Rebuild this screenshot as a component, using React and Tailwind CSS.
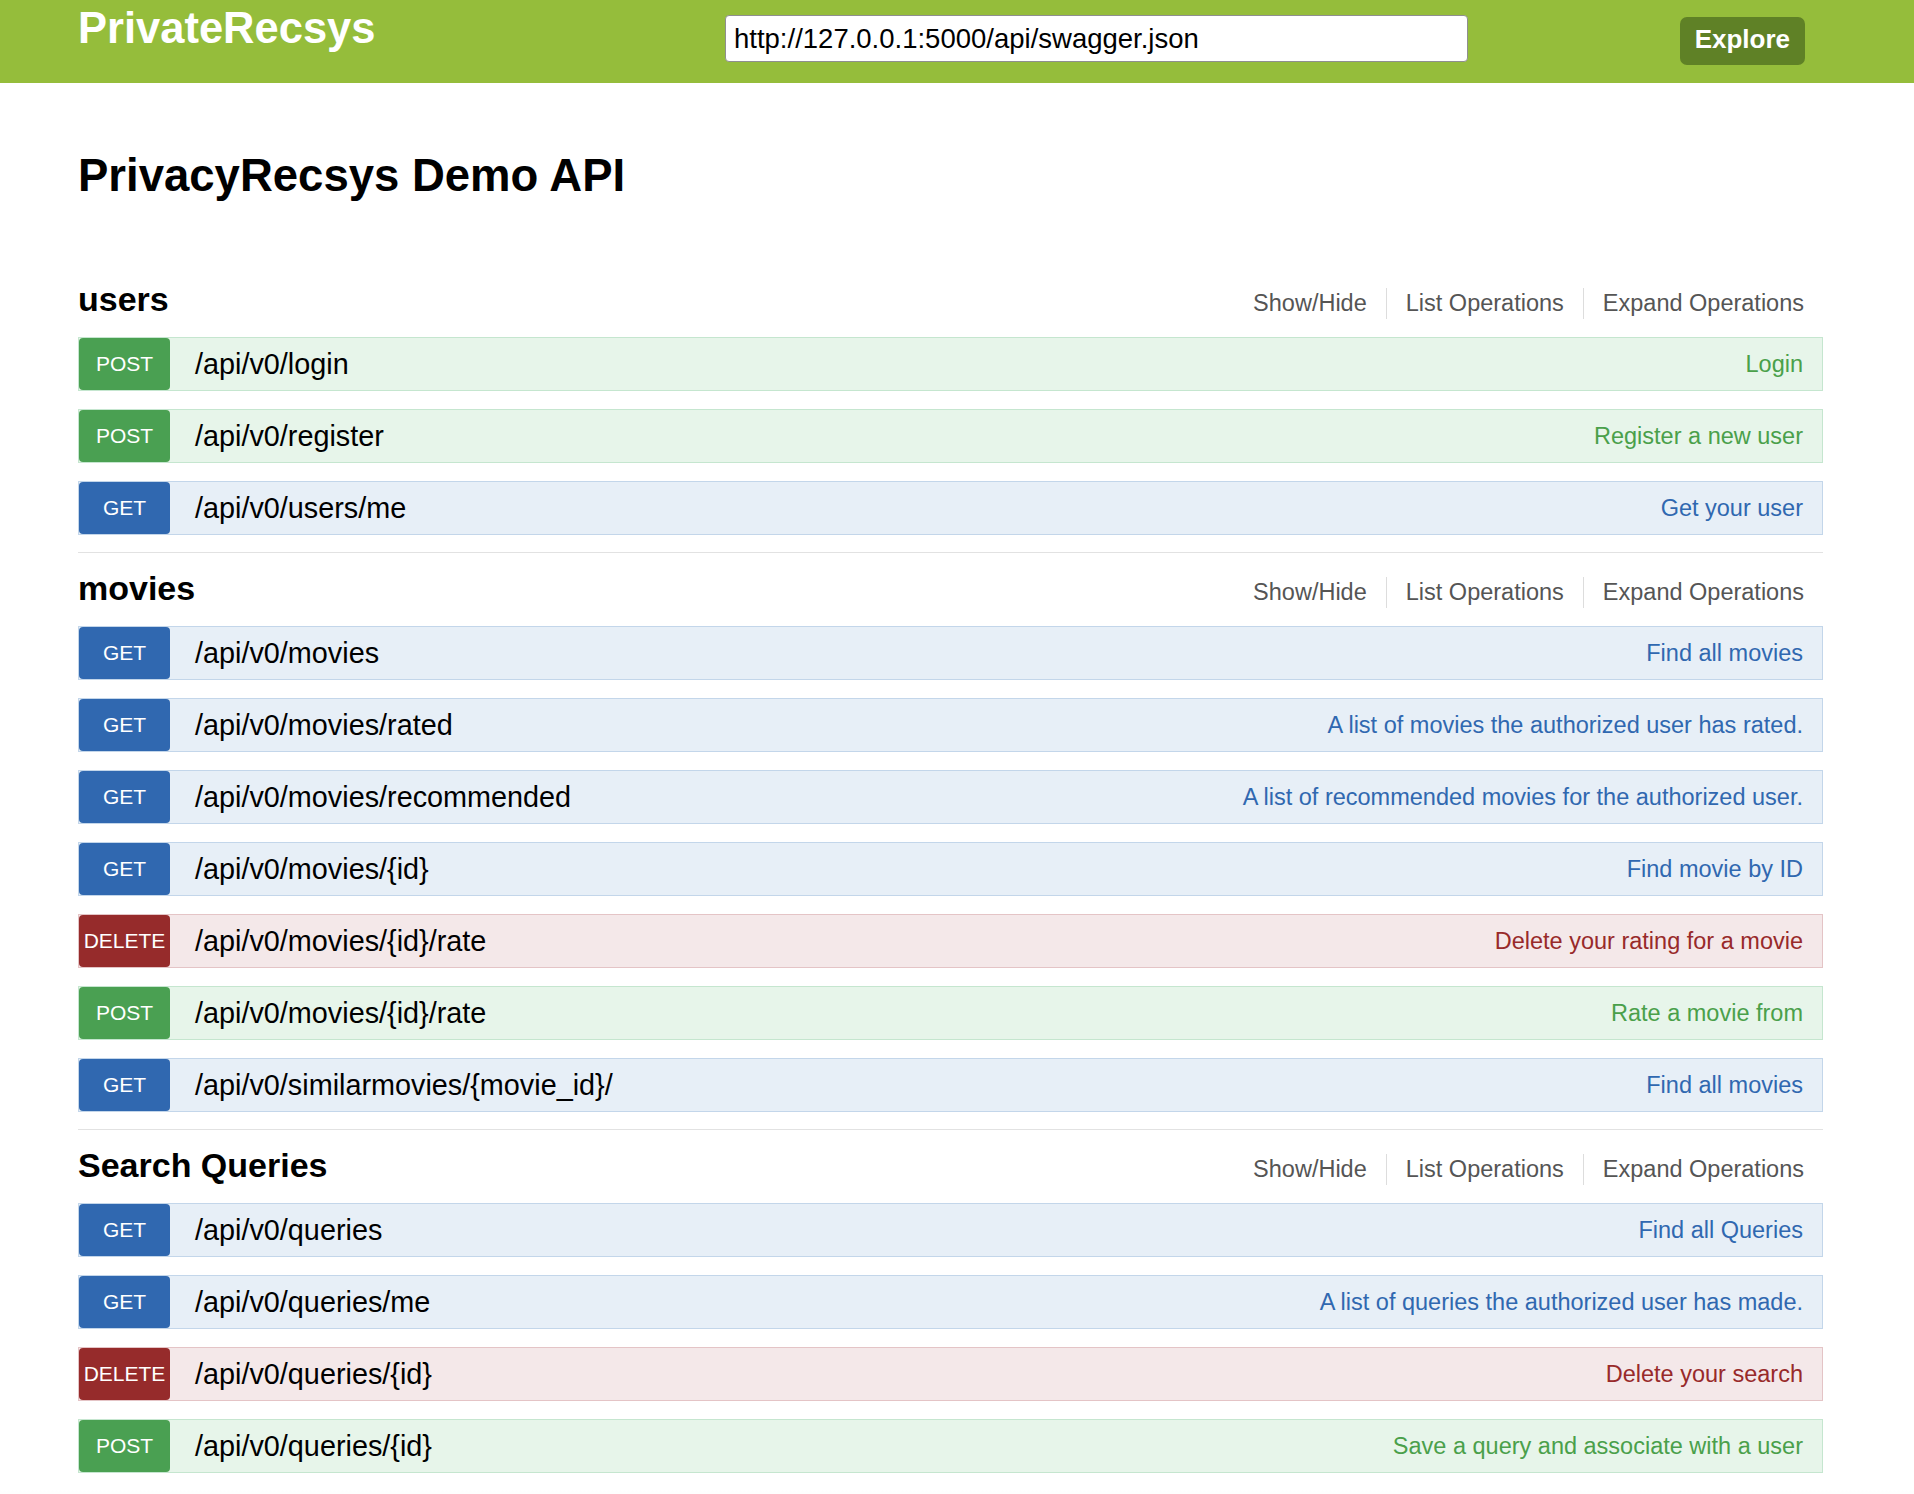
import React from "react";

const STYLES = {
  POST: {
    row: "bg-[#e7f5ea] border-[#c5e6cf]",
    badge: "bg-[#4aa052]",
    desc: "text-[#4aa04a]",
  },
  GET: {
    row: "bg-[#e7eff7] border-[#c3d6ea]",
    badge: "bg-[#3068b0]",
    desc: "text-[#3068b0]",
  },
  DELETE: {
    row: "bg-[#f4e8e9] border-[#e4c4c6]",
    badge: "bg-[#962b2b]",
    desc: "text-[#982a2a]",
  },
};

const SECTIONS = [
  {
    name: "users",
    ops: [
      ["POST", "/api/v0/login", "Login"],
      ["POST", "/api/v0/register", "Register a new user"],
      ["GET", "/api/v0/users/me", "Get your user"],
    ],
  },
  {
    name: "movies",
    ops: [
      ["GET", "/api/v0/movies", "Find all movies"],
      ["GET", "/api/v0/movies/rated", "A list of movies the authorized user has rated."],
      ["GET", "/api/v0/movies/recommended", "A list of recommended movies for the authorized user."],
      ["GET", "/api/v0/movies/{id}", "Find movie by ID"],
      ["DELETE", "/api/v0/movies/{id}/rate", "Delete your rating for a movie"],
      ["POST", "/api/v0/movies/{id}/rate", "Rate a movie from"],
      ["GET", "/api/v0/similarmovies/{movie_id}/", "Find all movies"],
    ],
  },
  {
    name: "Search Queries",
    ops: [
      ["GET", "/api/v0/queries", "Find all Queries"],
      ["GET", "/api/v0/queries/me", "A list of queries the authorized user has made."],
      ["DELETE", "/api/v0/queries/{id}", "Delete your search"],
      ["POST", "/api/v0/queries/{id}", "Save a query and associate with a user"],
    ],
  },
];

function Row({ method, path, desc }) {
  const s = STYLES[method];
  return (
    <div className={`flex items-center h-[54px] border ${s.row}`}>
      <div
        className={`w-[91px] h-full shrink-0 rounded-[4px] flex items-center justify-center text-white text-[21px] ${s.badge}`}
      >
        {method}
      </div>
      <div className="ml-[25px] text-[28.8px] text-black leading-[normal]">{path}</div>
      <div className={`ml-auto pr-[19px] text-[23.5px] leading-[normal] ${s.desc}`}>{desc}</div>
    </div>
  );
}

function Section({ name, ops, last }) {
  return (
    <section className={`pb-[17px] ${last ? "" : "border-b border-[#e2e2e2]"}`}>
      <div className="flex items-baseline justify-between pt-[16px] h-[73px]">
        <h2 className="text-[34px] font-bold text-black leading-[normal]">{name}</h2>
        <div className="flex items-baseline text-[23.5px] text-[#555] leading-[31px]">
          <span className="px-[19px]">Show/Hide</span>
          <span className="px-[19px] border-l border-[#dddddd]">List Operations</span>
          <span className="px-[19px] border-l border-[#dddddd]">Expand Operations</span>
        </div>
      </div>
      <div className="flex flex-col gap-[18px]">
        {ops.map(([m, p, d], i) => (
          <Row key={i} method={m} path={p} desc={d} />
        ))}
      </div>
    </section>
  );
}

export default function App() {
  return (
    <div className="min-h-screen bg-white font-['Liberation_Sans',Arial,sans-serif]">
      <header className="h-[83px] bg-[#95bd3b] flex items-start pl-[78px] pr-[109px]">
        <div className="w-[647px] shrink-0 mt-[4px] text-[43.5px] font-bold text-white leading-[normal]">
          PrivateRecsys
        </div>
        <input
          readOnly
          value="http://127.0.0.1:5000/api/swagger.json"
          className="w-[743px] h-[47px] mt-[15px] px-[8px] bg-white border border-[#8f8f8f] rounded-[4px] text-[27.5px] text-black outline-none font-['Liberation_Sans',Arial,sans-serif]"
        />
        <button className="ml-auto mt-[17px] h-[48px] px-[15px] pb-[4px] rounded-[7px] bg-[#5f8126] text-white text-[26px] font-bold leading-none">
          Explore
        </button>
      </header>
      <main className="pl-[78px] pr-[91px]">
        <h1 className="pt-[67px] mb-[62px] text-[45.5px] font-bold text-black leading-[normal]">
          PrivacyRecsys Demo API
        </h1>
        {SECTIONS.map((s, i) => (
          <Section key={s.name} name={s.name} ops={s.ops} last={i === SECTIONS.length - 1} />
        ))}
      </main>
      <div className="h-[30px] bg-gradient-to-b from-white to-[#f4f4f4]" />
    </div>
  );
}
